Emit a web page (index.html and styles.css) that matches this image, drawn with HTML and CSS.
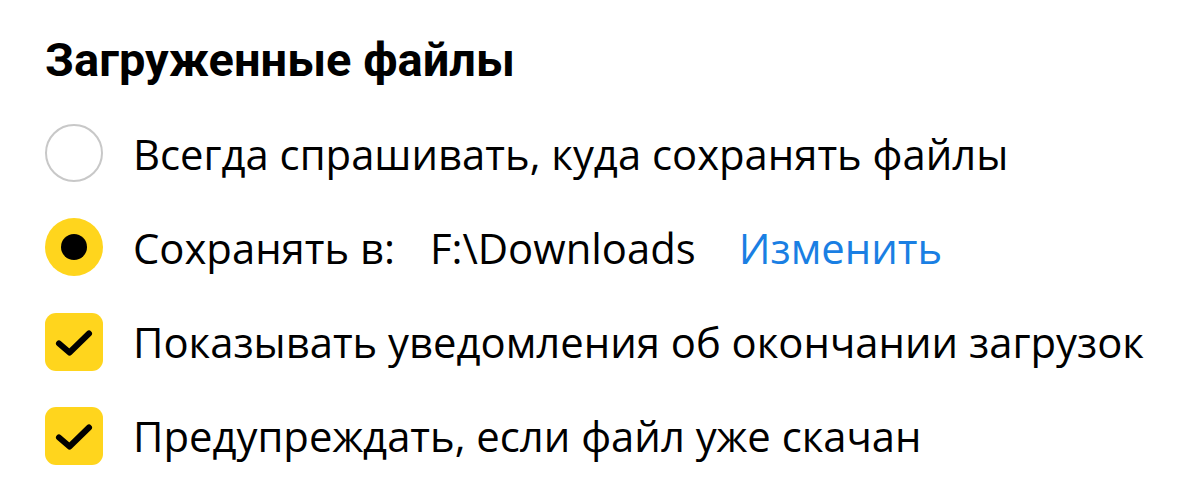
FILE: index.html
```html
<!DOCTYPE html>
<html lang="ru">
<head>
<meta charset="utf-8">
<link rel="stylesheet" href="styles.css">
</head>
<body>
<section class="settings">
  <h2 class="title">Загруженные файлы</h2>
  <div class="options">
    <div class="row">
      <span class="radio"></span>
      <span class="label">Всегда спрашивать, куда сохранять файлы</span>
    </div>
    <div class="row">
      <span class="radio radio-on"><span class="dot"></span></span>
      <span class="label">Сохранять в:</span>
      <span class="path">F:\Downloads</span>
      <a class="link">Изменить</a>
    </div>
    <div class="row">
      <span class="check"><svg viewBox="0 0 58 58" width="58" height="58"><path d="M14 30.5 L24.5 39.5 L44 20.5" fill="none" stroke="#000" stroke-width="6" stroke-linecap="round" stroke-linejoin="round"/></svg></span>
      <span class="label">Показывать уведомления об окончании загрузок</span>
    </div>
    <div class="row">
      <span class="check"><svg viewBox="0 0 58 58" width="58" height="58"><path d="M14 30.5 L24.5 39.5 L44 20.5" fill="none" stroke="#000" stroke-width="6" stroke-linecap="round" stroke-linejoin="round"/></svg></span>
      <span class="label">Предупреждать, если файл уже скачан</span>
    </div>
  </div>
</section>
</body>
</html>
```

FILE: styles.css
```css
html, body {
  margin: 0;
  padding: 0;
  background: #fff;
}
body {
  font-family: "Open Sans", "Noto Sans", sans-serif;
  color: #000;
}
.settings {
  padding: 31px 0 0 45px;
}
.title {
  margin: 0;
  font-family: "Roboto", "Open Sans", sans-serif;
  font-size: 47px;
  font-weight: 700;
  line-height: 58px;
}
.options {
  margin-top: 35px;
  display: flex;
  flex-direction: column;
  gap: 36.3px;
}
.row {
  display: flex;
  align-items: center;
  height: 58px;
  font-size: 41.8px;
}
.radio {
  box-sizing: border-box;
  width: 58px;
  height: 58px;
  border-radius: 50%;
  border: 2px solid #c8c8c8;
  flex: none;
  display: flex;
  align-items: center;
  justify-content: center;
}
.radio-on {
  border: none;
  background: #ffd51d;
}
.dot {
  width: 26px;
  height: 26px;
  border-radius: 50%;
  background: #000;
}
.check {
  width: 58px;
  height: 58px;
  border-radius: 11px;
  background: #ffd51d;
  flex: none;
  display: flex;
}
.label {
  margin-left: 30px;
}
.path {
  margin-left: 35px;
}
.link {
  margin-left: 43px;
  color: #1a7fe3;
}
```
